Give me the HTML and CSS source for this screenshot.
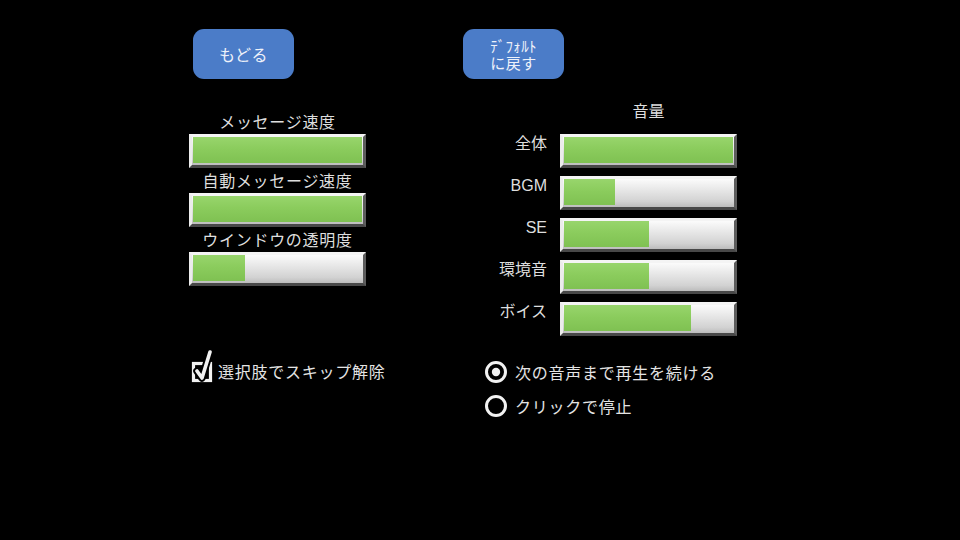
FILE: index.html
```html
<!DOCTYPE html>
<html lang="ja">
<head>
<meta charset="utf-8">
<title>設定</title>
<link rel="stylesheet" href="styles.css">
</head>
<body>
<div class="screen">
  <div class="col-left">
    <div class="btn">もどる</div>
    <div class="settings">
      <div class="setting-label">メッセージ速度</div>
      <div class="bar"><div class="fill" style="width:100%"></div></div>
      <div class="setting-label">自動メッセージ速度</div>
      <div class="bar"><div class="fill" style="width:100%"></div></div>
      <div class="setting-label">ウインドウの透明度</div>
      <div class="bar"><div class="fill" style="width:31%"></div></div>
    </div>
    <div class="check-row">
      <svg class="checkbox" width="28" height="36" viewBox="0 0 28 36">
        <rect x="4.5" y="13.5" width="17" height="17" fill="none" stroke="#f2f2f2" stroke-width="3.2"/>
        <polyline points="8,21 13,28 21,2" fill="none" stroke="#000" stroke-width="7.5" stroke-linecap="round" stroke-linejoin="round"/>
        <polyline points="8,21 13,28 21,2" fill="none" stroke="#f2f2f2" stroke-width="3.6" stroke-linecap="round" stroke-linejoin="round"/>
      </svg>
      <span class="opt-text">選択肢でスキップ解除</span>
    </div>
  </div>
  <div class="col-right">
    <div class="btn btn-two"><span class="hw">ﾃﾞﾌｫﾙﾄ</span><span>に戻す</span></div>
    <div class="vol-title">音量</div>
    <div class="vol-rows">
      <div class="vol-row"><div class="vol-label">全体</div><div class="bar"><div class="fill" style="width:100%"></div></div></div>
      <div class="vol-row"><div class="vol-label">BGM</div><div class="bar"><div class="fill" style="width:30%"></div></div></div>
      <div class="vol-row"><div class="vol-label">SE</div><div class="bar"><div class="fill" style="width:50%"></div></div></div>
      <div class="vol-row"><div class="vol-label">環境音</div><div class="bar"><div class="fill" style="width:50%"></div></div></div>
      <div class="vol-row"><div class="vol-label">ボイス</div><div class="bar"><div class="fill" style="width:75%"></div></div></div>
    </div>
    <div class="radios">
      <div class="radio-row">
        <svg class="radio" width="24" height="24" viewBox="0 0 24 24">
          <circle cx="12" cy="12" r="9.5" fill="none" stroke="#f2f2f2" stroke-width="3"/>
          <circle cx="12" cy="12" r="4.2" fill="#f2f2f2"/>
        </svg>
        <span class="opt-text">次の音声まで再生を続ける</span>
      </div>
      <div class="radio-row">
        <svg class="radio" width="24" height="24" viewBox="0 0 24 24">
          <circle cx="12" cy="12" r="9.5" fill="none" stroke="#f2f2f2" stroke-width="3"/>
        </svg>
        <span class="opt-text">クリックで停止</span>
      </div>
    </div>
  </div>
</div>
</body>
</html>
```
FILE: styles.css
```css
html, body {
  margin: 0;
  padding: 0;
}
body {
  width: 960px;
  height: 540px;
  overflow: hidden;
  background: #000;
  color: #dedede;
  font-family: "Liberation Sans", "Noto Sans CJK JP", sans-serif;
  font-size: 16px;
}
.screen {
  display: flex;
  padding-top: 29px;
}
.col-left {
  margin-left: 189px;
  width: 177px;
}
.col-right {
  margin-left: 97px;
  width: 274px;
}
.btn {
  width: 101px;
  height: 50px;
  border-radius: 11px;
  background: #4b7cc8;
  color: #eef2fa;
  display: flex;
  flex-direction: column;
  align-items: center;
  justify-content: center;
  font-family: "Noto Sans CJK JP", sans-serif;
  font-size: 16px;
  line-height: 18px;
  letter-spacing: 0.5px;
}
.col-left .btn {
  margin-left: 4px;
}
.btn-two {
  font-size: 15px;
  line-height: 17px;
}
.btn-two span {
  display: block;
  height: 17px;
}
.hw {
  letter-spacing: 0.3px;
}
.settings {
  margin-top: 30px;
}
.setting-label {
  height: 25px;
  line-height: 25px;
  text-align: center;
  font-family: "Noto Sans CJK JP", sans-serif;
  letter-spacing: 0.7px;
}
.bar {
  box-sizing: border-box;
  width: 177px;
  height: 34px;
  border-top: 3px solid #f4f4f4;
  border-left: 3px solid #ececec;
  border-right: 3px solid #5c5c5c;
  border-bottom: 3px solid #484848;
  background: linear-gradient(#fbfbfb 0%, #e9e9e9 35%, #d2d2d2 80%, #bcbcbc 100%);
  padding: 0 1px 2px 1px;
}
.fill {
  height: 100%;
  background: linear-gradient(#98d56c 0%, #8bcc5d 45%, #7fc152 100%);
}
.check-row {
  margin-top: 64px;
  display: flex;
  align-items: flex-start;
}
.checkbox {
  flex: none;
}
.check-row .opt-text {
  margin-top: 9px;
  margin-left: 1px;
}
.opt-text {
  font-family: "Noto Sans CJK JP", sans-serif;
  line-height: 24px;
  letter-spacing: 0.75px;
  color: #e4e4e4;
  white-space: nowrap;
}
.vol-title {
  margin-top: 19px;
  margin-left: 97px;
  width: 177px;
  height: 24px;
  line-height: 24px;
  text-align: center;
  font-family: "Noto Sans CJK JP", sans-serif;
}
.vol-rows {
  margin-top: 12px;
  display: flex;
  flex-direction: column;
  gap: 8px;
}
.vol-row {
  display: flex;
  gap: 13px;
}
.vol-label {
  width: 84px;
  text-align: right;
  line-height: 20px;
  font-family: "Liberation Sans", "Noto Sans CJK JP", sans-serif;
}
.radios {
  margin-top: 19px;
}
.radio-row {
  height: 34px;
  display: flex;
  align-items: center;
  padding-left: 21px;
  gap: 7px;
}
.radio {
  flex: none;
}
```
